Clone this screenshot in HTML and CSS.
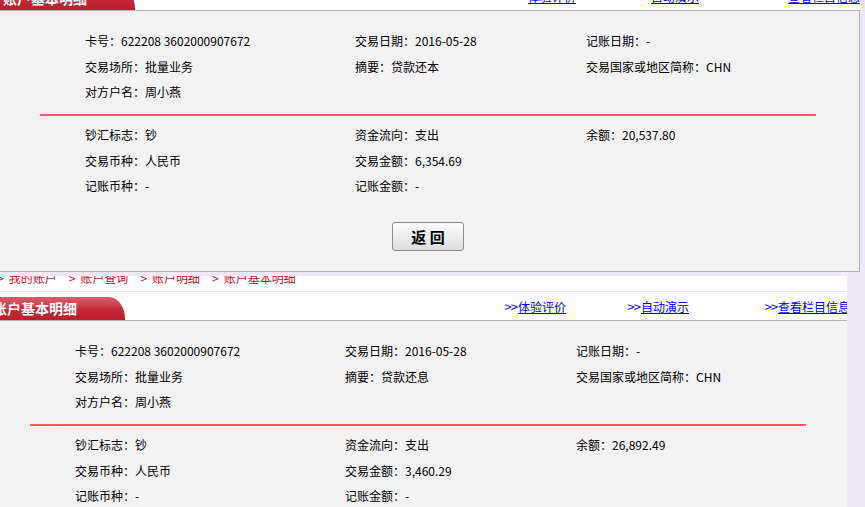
FILE: index.html
```html
<!DOCTYPE html>
<html lang="zh-CN">
<head>
    <meta charset="UTF-8">
    <meta name="viewport" content="width=device-width, initial-scale=1.0">
    <title>账户基本明细</title>
    <link rel="stylesheet" href="styles.css">
</head>
<body>
    <!-- First record -->
    <div class="shot shot-top">
        <div class="page">
            <div class="crumbs">
                <div class="crumbs-line">
                    <span class="sep first">&gt;</span>我的账户<span class="sep">&gt;</span>账户查询<span class="sep">&gt;</span>账户明细<span class="sep">&gt;</span>账户基本明细
                </div>
            </div>
            <div class="head">
                <div class="tab">账户基本明细</div>
                <div class="links">
                    <span class="link"><span class="arrows">&gt;&gt;</span><a href="#">体验评价</a></span>
                    <span class="link"><span class="arrows">&gt;&gt;</span><a href="#">自动演示</a></span>
                    <span class="link"><span class="arrows">&gt;&gt;</span><a href="#">查看栏目信息</a></span>
                </div>
            </div>
            <div class="panel">
                <div class="grid">
                    <div>卡号：622208 3602000907672</div>
                    <div>交易日期：2016-05-28</div>
                    <div>记账日期：-</div>
                    <div>交易场所：批量业务</div>
                    <div>摘要：贷款还本</div>
                    <div>交易国家或地区简称：CHN</div>
                    <div>对方户名：周小燕</div>
                    <div></div>
                    <div></div>
                </div>
                <div class="rule"></div>
                <div class="grid">
                    <div>钞汇标志：钞</div>
                    <div>资金流向：支出</div>
                    <div>余额：20,537.80</div>
                    <div>交易币种：人民币</div>
                    <div>交易金额：6,354.69</div>
                    <div></div>
                    <div>记账币种：-</div>
                    <div>记账金额：-</div>
                    <div></div>
                </div>
                <div class="actions">
                    <button class="back-btn" onclick="history.back()">返 回</button>
                </div>
            </div>
        </div>
    </div>

    <!-- Second record -->
    <div class="shot shot-bottom">
        <div class="page">
            <div class="crumbs">
                <div class="crumbs-line">
                    <span class="sep first">&gt;</span>我的账户<span class="sep">&gt;</span>账户查询<span class="sep">&gt;</span>账户明细<span class="sep">&gt;</span>账户基本明细
                </div>
            </div>
            <div class="head">
                <div class="tab">账户基本明细</div>
                <div class="links">
                    <span class="link"><span class="arrows">&gt;&gt;</span><a href="#">体验评价</a></span>
                    <span class="link"><span class="arrows">&gt;&gt;</span><a href="#">自动演示</a></span>
                    <span class="link"><span class="arrows">&gt;&gt;</span><a href="#">查看栏目信息</a></span>
                </div>
            </div>
            <div class="panel">
                <div class="grid">
                    <div>卡号：622208 3602000907672</div>
                    <div>交易日期：2016-05-28</div>
                    <div>记账日期：-</div>
                    <div>交易场所：批量业务</div>
                    <div>摘要：贷款还息</div>
                    <div>交易国家或地区简称：CHN</div>
                    <div>对方户名：周小燕</div>
                    <div></div>
                    <div></div>
                </div>
                <div class="rule"></div>
                <div class="grid">
                    <div>钞汇标志：钞</div>
                    <div>资金流向：支出</div>
                    <div>余额：26,892.49</div>
                    <div>交易币种：人民币</div>
                    <div>交易金额：3,460.29</div>
                    <div></div>
                    <div>记账币种：-</div>
                    <div>记账金额：-</div>
                    <div></div>
                </div>
                <div class="actions">
                    <button class="back-btn" onclick="history.back()">返 回</button>
                </div>
            </div>
        </div>
    </div>
</body>
</html>
```

FILE: styles.css
```css
body {
    margin: 0;
    padding: 0;
    background-color: #eee8f7;
    font-family: "Noto Sans CJK SC", "Liberation Sans", sans-serif;
    font-size: 12px;
    color: #000;
    overflow: hidden;
    height: 507px;
}
.shot {
    overflow: hidden;
}
.shot-top {
    width: 860px;
    height: 272px;
    margin-bottom: 4px;
}
.shot-top .page {
    margin-top: -34px;
}
.shot-bottom {
    width: 847px;
}
.shot-bottom .page {
    margin-left: -10px;
}
.page {
    width: 860px;
    background-color: white;
}

/* breadcrumb */
.crumbs {
    height: 15px;
    overflow: hidden;
    border-bottom: 1px solid #e6e6e6;
    padding-left: 7px;
}
.crumbs-line {
    margin-top: -4px;
    line-height: 12px;
    color: #c8102e;
    white-space: nowrap;
}
.sep {
    margin: 0 5px 0 12px;
}
.sep.first {
    margin-left: 0;
}

/* title bar */
.head {
    display: flex;
    align-items: flex-end;
    height: 28px;
    border-bottom: 1px solid #b4b4b4;
}
.tab {
    width: 132px;
    height: 23px;
    padding-left: 3px;
    box-sizing: content-box;
    background: linear-gradient(to bottom, #d85d69 0%, #cf4250 35%, #c52836 55%, #bd1d2c 100%);
    border-top-right-radius: 16px 22px;
    color: white;
    font-size: 14px;
    font-weight: bold;
    line-height: 23px;
    white-space: nowrap;
}
.links {
    display: grid;
    grid-template-columns: 123px 137px auto;
    align-self: center;
    padding-left: 380px;
    padding-top: 2px;
    white-space: nowrap;
    line-height: 14px;
}
.link {
    color: #0000ff;
}
.arrows {
    letter-spacing: -1px;
    margin-right: 1px;
    font-size: 13px;
}
.link a {
    color: #0000ff;
    text-decoration: underline;
}

/* detail panel */
.panel {
    background-color: #f2f2f2;
    border-right: 1px solid #b0b0b0;
    border-bottom: 1px solid #b0b0b0;
    width: 859px;
    padding: 17px 0 20px 0;
}
.grid {
    display: grid;
    grid-template-columns: 270px 231px 1fr;
    grid-auto-rows: 25.5px;
    align-items: center;
    padding-left: 85px;
    white-space: nowrap;
}
.rule {
    height: 2px;
    background-color: #ff5a5f;
    margin: 9.5px 0 6px 40px;
    width: 776px;
}
.actions {
    margin-top: 23.5px;
    padding-left: 392px;
}
.back-btn {
    width: 72px;
    height: 29px;
    padding: 0;
    border: 1px solid #8d8d8d;
    border-radius: 3px;
    background: linear-gradient(to bottom, #fbfbfb 0%, #eeeeee 50%, #dcdcdc 100%);
    font-family: "Noto Sans CJK SC", sans-serif;
    font-size: 15px;
    font-weight: bold;
    color: #000;
    cursor: pointer;
}
```
